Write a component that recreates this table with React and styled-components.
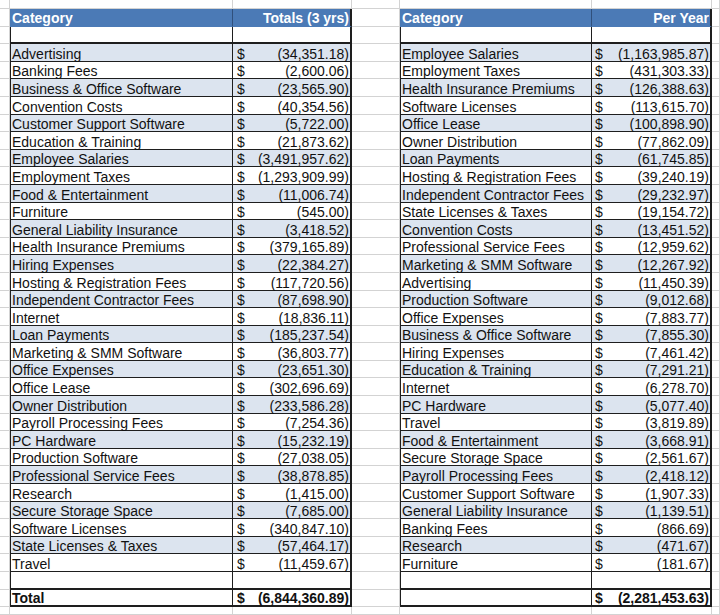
import React from 'react'
import styled, { createGlobalStyle } from 'styled-components'

const GRID = '#d3d3d3'
const INK = '#1e1e1e'
const SHADE = '#dce4ef'
const HEAD = '#4b7ab6'

const left = [
  ['Advertising', '(34,351.18)'],
  ['Banking Fees', '(2,600.06)'],
  ['Business & Office Software', '(23,565.90)'],
  ['Convention Costs', '(40,354.56)'],
  ['Customer Support Software', '(5,722.00)'],
  ['Education & Training', '(21,873.62)'],
  ['Employee Salaries', '(3,491,957.62)'],
  ['Employment Taxes', '(1,293,909.99)'],
  ['Food & Entertainment', '(11,006.74)'],
  ['Furniture', '(545.00)'],
  ['General Liability Insurance', '(3,418.52)'],
  ['Health Insurance Premiums', '(379,165.89)'],
  ['Hiring Expenses', '(22,384.27)'],
  ['Hosting & Registration Fees', '(117,720.56)'],
  ['Independent Contractor Fees', '(87,698.90)'],
  ['Internet', '(18,836.11)'],
  ['Loan Payments', '(185,237.54)'],
  ['Marketing & SMM Software', '(36,803.77)'],
  ['Office Expenses', '(23,651.30)'],
  ['Office Lease', '(302,696.69)'],
  ['Owner Distribution', '(233,586.28)'],
  ['Payroll Processing Fees', '(7,254.36)'],
  ['PC Hardware', '(15,232.19)'],
  ['Production Software', '(27,038.05)'],
  ['Professional Service Fees', '(38,878.85)'],
  ['Research', '(1,415.00)'],
  ['Secure Storage Space', '(7,685.00)'],
  ['Software Licenses', '(340,847.10)'],
  ['State Licenses & Taxes', '(57,464.17)'],
  ['Travel', '(11,459.67)'],
]

const right = [
  ['Employee Salaries', '(1,163,985.87)'],
  ['Employment Taxes', '(431,303.33)'],
  ['Health Insurance Premiums', '(126,388.63)'],
  ['Software Licenses', '(113,615.70)'],
  ['Office Lease', '(100,898.90)'],
  ['Owner Distribution', '(77,862.09)'],
  ['Loan Payments', '(61,745.85)'],
  ['Hosting & Registration Fees', '(39,240.19)'],
  ['Independent Contractor Fees', '(29,232.97)'],
  ['State Licenses & Taxes', '(19,154.72)'],
  ['Convention Costs', '(13,451.52)'],
  ['Professional Service Fees', '(12,959.62)'],
  ['Marketing & SMM Software', '(12,267.92)'],
  ['Advertising', '(11,450.39)'],
  ['Production Software', '(9,012.68)'],
  ['Office Expenses', '(7,883.77)'],
  ['Business & Office Software', '(7,855.30)'],
  ['Hiring Expenses', '(7,461.42)'],
  ['Education & Training', '(7,291.21)'],
  ['Internet', '(6,278.70)'],
  ['PC Hardware', '(5,077.40)'],
  ['Travel', '(3,819.89)'],
  ['Food & Entertainment', '(3,668.91)'],
  ['Secure Storage Space', '(2,561.67)'],
  ['Payroll Processing Fees', '(2,418.12)'],
  ['Customer Support Software', '(1,907.33)'],
  ['General Liability Insurance', '(1,139.51)'],
  ['Banking Fees', '(866.69)'],
  ['Research', '(471.67)'],
  ['Furniture', '(181.67)'],
]

const GlobalStyle = createGlobalStyle`
  html, body { margin: 0; padding: 0; background: #fff; }
  body { font-family: "Liberation Sans", Arial, sans-serif; }
`

const Sheet = styled.div`
  display: grid;
  grid-template-columns: 10px 223px 119px 48px 192px 120px 1fr;
  grid-template-rows: 9px repeat(34, 17.6px) 1fr;
  width: 720px;
  height: 615px;
  overflow: hidden;
  color: #111;
`

const Cell = styled.div`
  box-sizing: border-box;
  min-width: 0;
  display: flex;
  align-items: flex-end;
  white-space: nowrap;
  font-size: 14px;
  line-height: 13px;
  border-right: 1px solid ${GRID};
  border-bottom: 1px solid ${GRID};
`

const HeadCell = styled(Cell)`
  background: ${HEAD};
  color: #fff;
  font-weight: 700;
  padding: 0 1px 1px 2px;
  justify-content: ${p => (p.$end ? 'flex-end' : 'flex-start')};
  border-bottom-color: ${HEAD};
  border-right: ${p => (p.$end ? `2px solid ${INK}` : `1px solid #30507c`)};
`

const CatCell = styled(Cell)`
  background: ${p => (p.$shade ? SHADE : '#fff')};
  font-weight: ${p => (p.$bold ? 700 : 400)};
  padding-left: 1px;
  border-left: 1px solid ${INK};
  border-right: 1px solid ${INK};
  border-bottom: ${p => (p.$heavy ? 2 : 1)}px solid ${INK};
`

const AmtCell = styled(Cell)`
  justify-content: space-between;
  background: ${p => (p.$shade ? SHADE : '#fff')};
  font-weight: ${p => (p.$bold ? 700 : 400)};
  padding: 0 1px 0 ${p => p.$pad}px;
  border-right: 2px solid ${INK};
  border-bottom: ${p => (p.$heavy ? 2 : 1)}px solid ${INK};
`

function TableCells({ row, pad, data, title, total, label }) {
  if (row === 1) {
    return (
      <>
        <HeadCell>Category</HeadCell>
        <HeadCell $end>{title}</HeadCell>
      </>
    )
  }
  if (row === 2 || row === 33) {
    return (
      <>
        <CatCell $heavy />
        <AmtCell $heavy $pad={pad} />
      </>
    )
  }
  if (row === 34) {
    return (
      <>
        <CatCell $bold $heavy>{label}</CatCell>
        <AmtCell $bold $heavy $pad={pad}>
          <span>$</span>
          <span>{total}</span>
        </AmtCell>
      </>
    )
  }
  const i = row - 3
  const [name, value] = data[i]
  const shade = i % 2 === 0
  return (
    <>
      <CatCell $shade={shade}>{name}</CatCell>
      <AmtCell $shade={shade} $pad={pad}>
        <span>$</span>
        <span>{value}</span>
      </AmtCell>
    </>
  )
}

export default function App() {
  const rows = Array.from({ length: 36 }, (_, r) => r)
  return (
    <>
      <GlobalStyle />
      <Sheet>
        {rows.map(r =>
          r === 0 || r === 35 ? (
            <React.Fragment key={r}>
              {Array.from({ length: 7 }, (_, c) => <Cell key={c} />)}
            </React.Fragment>
          ) : (
            <React.Fragment key={r}>
              <Cell />
              <TableCells row={r} pad={4} data={left} title="Totals (3 yrs)" total="(6,844,360.89)" label="Total" />
              <Cell />
              <TableCells row={r} pad={3} data={right} title="Per Year" total="(2,281,453.63)" label="" />
              <Cell />
            </React.Fragment>
          )
        )}
      </Sheet>
    </>
  )
}
